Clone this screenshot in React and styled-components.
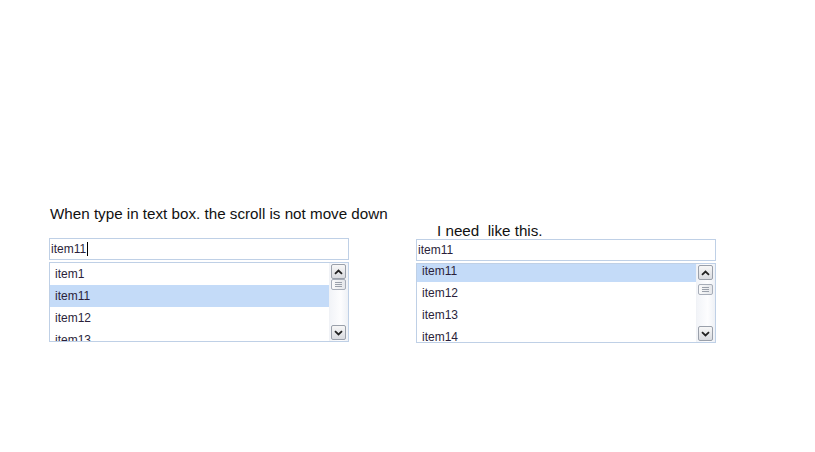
import React from 'react'
import styled, { createGlobalStyle } from 'styled-components'

const GlobalStyle = createGlobalStyle`
  html, body {
    margin: 0;
    padding: 0;
    background: #fff;
  }
  body {
    font-family: "Liberation Sans", Arial, sans-serif;
  }
`

const Page = styled.div`
  width: 815px;
  height: 452px;
  display: flex;
  gap: 67px;
  padding: 205px 0 0 49px;
  box-sizing: border-box;
`

const Column = styled.div`
  width: 300px;
  display: flex;
  flex-direction: column;
`

const Title = styled.div`
  font-size: 15.2px;
  color: #111;
  white-space: pre;
  height: 17px;
  line-height: 17px;
  padding-left: ${p => p.indent || 1}px;
  margin-top: ${p => p.top || 0}px;
  margin-bottom: ${p => p.bottom || 0}px;
`

const TextBox = styled.div`
  height: 22px;
  box-sizing: border-box;
  border: 1px solid #bfd0e6;
  display: flex;
  align-items: center;
  padding-left: 1px;
  font-size: 12px;
  color: #2b1f3a;
`

const Caret = styled.span`
  display: inline-block;
  width: 1px;
  height: 14px;
  background: #000;
  margin-left: 1px;
`

const ListBox = styled.div`
  margin-top: 2px;
  height: 80px;
  box-sizing: border-box;
  border: 1px solid #bfd0e6;
  display: flex;
  overflow: hidden;
`

const Rows = styled.div`
  flex: 1;
  overflow: hidden;
`

const RowTrack = styled.div`
  margin-top: ${p => p.offset}px;
`

const Row = styled.div`
  height: 22px;
  line-height: 22px;
  padding-left: 5px;
  font-size: 12px;
  color: #2b1f3a;
  background: ${p => (p.selected ? '#c4dbf8' : 'transparent')};
`

const ScrollBar = styled.div`
  width: 17px;
  display: flex;
  flex-direction: column;
  align-items: center;
  background: linear-gradient(to right, #f2f4f8, #fdfdfe 60%, #eef1f6);
  padding: 0 1px 0 0;
  border-left: 1px solid #f0f2f6;
`

const ArrowButton = styled.div`
  width: 15px;
  height: 15px;
  margin-top: ${p => p.top || 0}px;
  box-sizing: border-box;
  border: 1px solid #9aa0aa;
  border-radius: 2px;
  background: linear-gradient(to bottom, #f7f7f7, #d9dbe0);
  display: flex;
  align-items: center;
  justify-content: center;
`

const Thumb = styled.div`
  width: 15px;
  height: 11px;
  margin-top: ${p => p.top}px;
  box-sizing: border-box;
  border: 1px solid #a7adb8;
  border-radius: 2px;
  background: linear-gradient(to right, #fafafa, #e4e6ea);
  display: flex;
  flex-direction: column;
  align-items: center;
  justify-content: center;
  gap: 1px;
`

const Grip = styled.span`
  width: 7px;
  height: 1px;
  background: #9aa0aa;
`

const Spacer = styled.div`
  flex: 1;
`

const BottomGap = styled.div`
  height: 1px;
`

const Chevron = ({ down }) => (
  <svg width="9" height="6" viewBox="0 0 9 6">
    <path
      d={down ? 'M1 1.2 L4.5 4.5 L8 1.2' : 'M1 4.8 L4.5 1.5 L8 4.8'}
      fill="none"
      stroke="#222"
      strokeWidth="1.8"
    />
  </svg>
)

const Scroller = ({ thumbTop }) => (
  <ScrollBar>
    <ArrowButton top={1}>
      <Chevron />
    </ArrowButton>
    <Thumb top={thumbTop}>
      <Grip />
      <Grip />
      <Grip />
    </Thumb>
    <Spacer />
    <ArrowButton>
      <Chevron down />
    </ArrowButton>
    <BottomGap />
  </ScrollBar>
)

const Dropdown = ({ items, selected, offset, thumbTop }) => (
  <ListBox>
    <Rows>
      <RowTrack offset={offset}>
        {items.map(item => (
          <Row key={item} selected={item === selected}>{item}</Row>
        ))}
      </RowTrack>
    </Rows>
    <Scroller thumbTop={thumbTop} />
  </ListBox>
)

export default function App() {
  return (
    <>
      <GlobalStyle />
      <Page>
        <Column>
          <Title bottom={16}>When type in text box. the scroll is not move down</Title>
          <TextBox>
            item11<Caret />
          </TextBox>
          <Dropdown
            items={['item1', 'item11', 'item12', 'item13']}
            selected="item11"
            offset={0}
            thumbTop={0}
          />
        </Column>
        <Column>
          <Title indent={21} top={17}>I need  like this.</Title>
          <TextBox>item11</TextBox>
          <Dropdown
            items={['item11', 'item12', 'item13', 'item14']}
            selected="item11"
            offset={-4}
            thumbTop={4}
          />
        </Column>
      </Page>
    </>
  )
}
